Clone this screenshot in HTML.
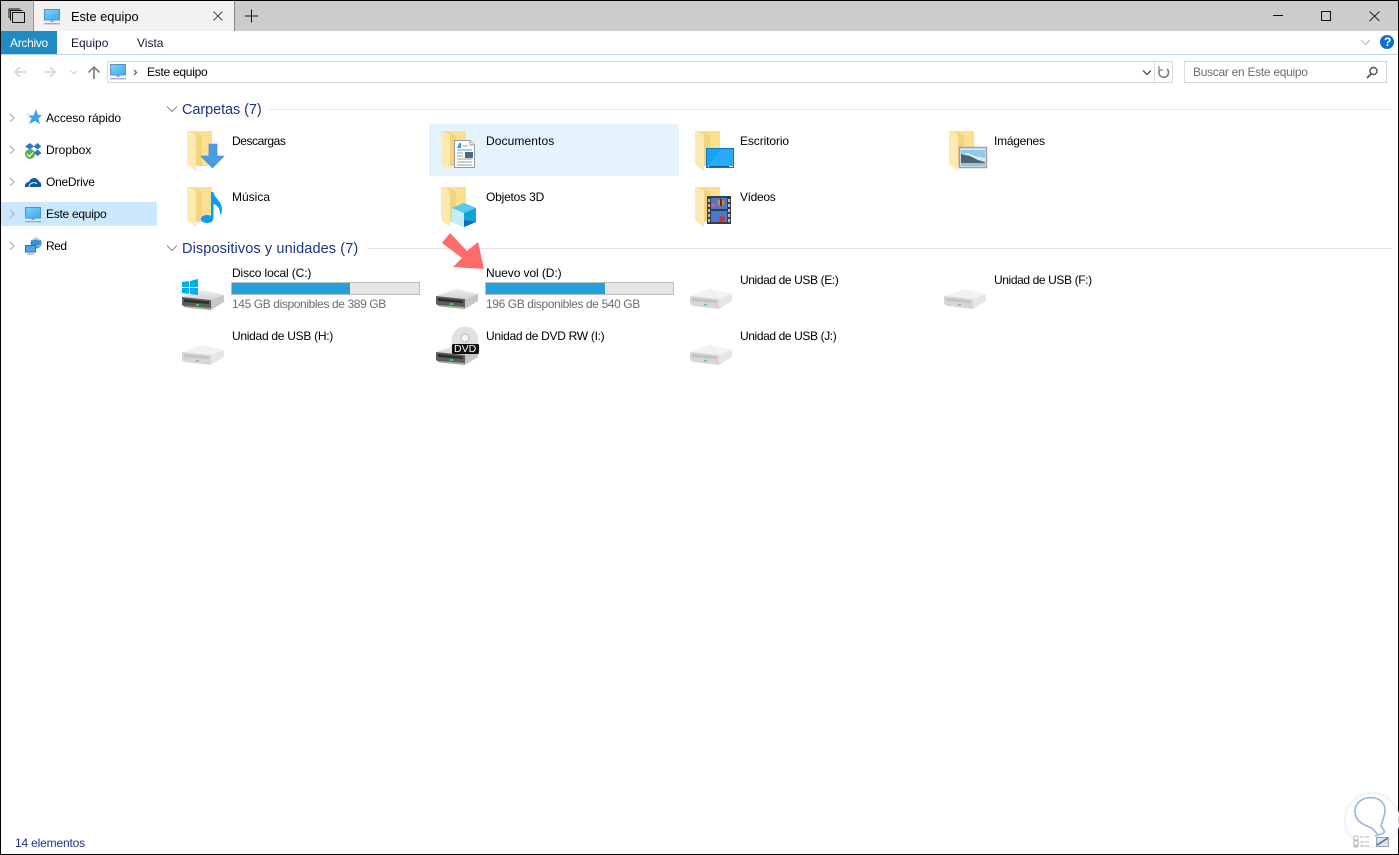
<!DOCTYPE html>
<html lang="es">
<head>
<meta charset="utf-8">
<title>Este equipo</title>
<style>
html,body{margin:0;padding:0;background:#fff;}
body{position:relative;width:1399px;height:855px;overflow:hidden;font-family:"Liberation Sans",sans-serif;font-size:12px;color:#000;}
.a{position:absolute;}
.t{position:absolute;height:16px;line-height:16px;white-space:nowrap;}
.h{position:absolute;height:20px;line-height:20px;font-size:14.5px;color:#1e3287;white-space:nowrap;}
.g{color:#6d6d6d;}
.bar{position:absolute;width:187px;height:11px;background:#e6e6e6;border:1px solid #bcbcbc;}
.bar div{height:11px;background:#26a0da;}
svg{position:absolute;left:0;top:0;}
</style>
</head>
<body>
<div class="a" style="left:0;top:0;width:1399px;height:31px;background:#ccc;"></div>
<div class="a" style="left:34px;top:1px;width:200px;height:30px;background:#f2f2f2;"></div>
<div class="a" style="left:33px;top:1px;width:1px;height:30px;background:#9a9a9a;"></div>
<div class="a" style="left:234px;top:1px;width:1px;height:30px;background:#888;"></div>
<div class="a" style="left:1px;top:31px;width:56px;height:23px;background:#1e8bc3;"></div>
<div class="a" style="left:1px;top:54px;width:1397px;height:1px;background:#bcd8e6;"></div>
<div class="a" style="left:107px;top:61px;width:1064px;height:20px;border:1px solid #d9d9d9;"></div>
<div class="a" style="left:1154px;top:62px;width:1px;height:20px;background:#d9d9d9;"></div>
<div class="a" style="left:1184px;top:61px;width:201px;height:20px;border:1px solid #d9d9d9;"></div>
<div class="a" style="left:1px;top:202px;width:156px;height:24px;background:#cce8ff;"></div>
<div class="a" style="left:429px;top:124px;width:250px;height:52px;background:#e5f3ff;"></div>
<div class="a" style="left:269px;top:109px;width:1123px;height:1px;background:#e5e5e5;"></div>
<div class="a" style="left:367px;top:248px;width:1025px;height:1px;background:#e5e5e5;"></div>

<svg width="1399" height="855" viewBox="0 0 1399 855" fill="none">
<defs>
<linearGradient id="scr" x1="0" y1="0" x2="1" y2="1"><stop offset="0" stop-color="#7fd3fb"/><stop offset="1" stop-color="#3aa9f2"/></linearGradient>
<linearGradient id="dt" x1="0" y1="0" x2="0" y2="1"><stop offset="0" stop-color="#ececec"/><stop offset="1" stop-color="#d4d4d4"/></linearGradient>
<g id="pc">
<rect x="0.5" y="0.5" width="15" height="10.5" fill="url(#scr)" stroke="#5a8fb8"/>
<rect x="6.5" y="11" width="3" height="2" fill="#8aa0b8"/>
<rect x="0" y="14" width="16" height="1.4" fill="#a9a3d9"/>
</g>
<g id="folder">
<path d="M0 0H25V35H9V40L0 33Z" fill="#fcdf90"/>
<path d="M8 1L15 5V35H8Z" fill="#f2d47f"/>
<path d="M0 0L9 4V40L0 33Z" fill="#fdeab2"/>
</g>
<g id="drive">
<path d="M0 7L20 0L42 5L29 10Z" fill="url(#dt)"/>
<path d="M0 7L29 10V20L3 17L0 15Z" fill="#5e5e5e"/>
<path d="M2 9L27 11.500V14L2 12Z" fill="#2e2e2e"/>
<path d="M3 16L29 18V20L3 17.500Z" fill="#a8a8a8"/>
<path d="M29 10L42 5V12L29 20Z" fill="#c6c6c6"/>
<rect x="14" y="14" width="3" height="2" fill="#3fd24f"/>
</g>
<g id="usb">
<path d="M0 7L20 0L42 5L29 10Z" fill="#f2f2f2"/>
<path d="M0 7L29 10V20L3 17L0 15Z" fill="#d6d6d6"/>
<path d="M2 9L27 11.500V14L2 12Z" fill="#c2c2c2"/>
<path d="M29 10L42 5V12L29 20Z" fill="#e6e6e6"/>
<rect x="14" y="15" width="3" height="1.500" fill="#74c77f"/>
</g>
</defs>

<!-- window border -->
<rect x="0" y="0" width="1399" height="1" fill="#000"/>
<rect x="0" y="0" width="1" height="855" fill="#000"/>
<rect x="1398" y="0" width="1" height="855" fill="#000"/>
<rect x="0" y="854" width="1399" height="1" fill="#000"/>

<!-- title bar -->
<rect x="12.500" y="12.500" width="12" height="10" fill="none" stroke="#111"/>
<path d="M10.500 20.500V10.500H22.500M9 18V9H20" stroke="#111"/>
<use href="#pc" x="44" y="9"/>
<path d="M213.500 11.500L222.500 20.500M222.500 11.500L213.500 20.500" stroke="#444"/>
<path d="M251.500 9.500V22.500M245 16H258" stroke="#111" stroke-width="1"/>
<path d="M1273 15.500H1283" stroke="#111"/>
<rect x="1321.500" y="11.500" width="9" height="9" stroke="#111"/>
<path d="M1369.500 11.500L1379.500 21M1379.500 11.500L1369.500 21" stroke="#222"/>

<!-- ribbon right -->
<path d="M1361 40L1365.500 44.500L1370 40" stroke="#b5b5b5"/>
<circle cx="1387" cy="42" r="7" fill="#0f6fd0"/>

<!-- nav -->
<path d="M26 72H15M20 67L15 72L20 77" stroke="#d6d6d6" stroke-width="1.600"/>
<path d="M44 72H55M50 67L55 72L50 77" stroke="#d6d6d6" stroke-width="1.600"/>
<path d="M71 71L74 74L77 71" stroke="#d2d2d2" stroke-width="1.200"/>
<path d="M94 79V67M88.500 72.500L94 67L99.500 72.500" stroke="#858585" stroke-width="1.800"/>
<use href="#pc" x="110" y="64"/>
<path d="M134 70L136.500 72.500L134 75" stroke="#666" stroke-width="1.300"/>
<path d="M1143 70.500L1147 74.500L1151 70.500" stroke="#555" stroke-width="1.400"/>
<path d="M1167 69A4.800 4.800 0 1 1 1160 69.500" stroke="#7e7e7e" stroke-width="1.600"/>
<path d="M1159 66V70H1163" stroke="#7e7e7e" stroke-width="1.200"/>
<circle cx="1373.500" cy="71" r="3.500" stroke="#555" stroke-width="1.400"/>
<path d="M1371 74L1367 78" stroke="#555" stroke-width="1.800"/>

<!-- sidebar chevrons -->
<path d="M10 114L14 118L10 122M10 146L14 150L10 154M10 178L14 182L10 186M10 210L14 214L10 218M10 242L14 246L10 250" stroke="#b9b9b9" stroke-width="1.300"/>
<!-- star -->
<path d="M36 109L38 115H42L38.500 118.500L40 124L35 121L29 124L31.500 118.500L28 115.500H33.500Z" fill="#3da3ea"/>
<path d="M26 114H30M27 118H29" stroke="#bcdcf5"/>
<!-- dropbox -->
<path d="M30 143L25 146.500L30 149.500L34 146.500ZM37.500 143L33.500 146.500L37.500 149.500L41.500 146.500ZM30 149.500L25 153L30 156L34 153ZM37.500 149.500L33.500 153L37.500 156L41.500 153Z" fill="#2a78c8"/>
<circle cx="30" cy="154" r="5" fill="#5fae4a"/>
<path d="M27 154L29.500 156.500L33 152.500" stroke="#fff" stroke-width="1.200"/>
<!-- onedrive -->
<path d="M25 187C24.500 184 26.500 182 29 182C30.500 177 37 176.500 39 181.500C41 182 41.800 185 41 187Z" fill="#0f5aa8"/>
<path d="M29 187C29 183.500 33 181.500 37 183.500" stroke="#fff" stroke-width="1"/>
<!-- pc -->
<use href="#pc" x="25" y="207"/>
<!-- red -->
<circle cx="36" cy="243" r="5.500" fill="#3a8fd8"/>
<path d="M32 240C34 238 38 238 40 240" stroke="#cfe6f8" stroke-width="1.500"/>
<path d="M34 246C36 247 39 246 40 245" stroke="#9cccf0" stroke-width="1"/>
<rect x="25.500" y="245.500" width="10" height="6.500" fill="#4aa5ea" stroke="#3b6f9c"/>
<path d="M27 254H34" stroke="#a9a3d9" stroke-width="1.300"/>

<!-- section chevrons -->
<path d="M167 106.500L172 111.500L177 106.500M167 245.500L172 250.500L177 245.500" stroke="#8a8a8a" stroke-width="1"/>

<!-- folders -->
<use href="#folder" x="187" y="131"/>
<use href="#folder" x="441" y="131"/>
<use href="#folder" x="695" y="131"/>
<use href="#folder" x="949" y="131"/>
<use href="#folder" x="187" y="187"/>
<use href="#folder" x="441" y="187"/>
<use href="#folder" x="695" y="187"/>

<!-- download arrow -->
<path d="M209 144H217V156H224L212.500 168L201 156H209Z" fill="#4a9be8" stroke="#3c86d2" stroke-width="0.600"/>
<!-- music -->
<ellipse cx="207" cy="219" rx="6" ry="4" fill="#0a9cf0"/>
<path d="M211 219V192H213.500C214 198 222 201 222 209C222 212 221 214 220 215C220.500 208 217 205 213.500 204V219Z" fill="#0a9cf0"/>
<!-- document -->
<path d="M454.500 140.500H470L474.500 145V167.500H454.500Z" fill="#fff" stroke="#999"/>
<path d="M470 140.500V145H474.500" stroke="#999" fill="#eee"/>
<path d="M457 148L459.500 143H461V148Z" fill="#2b95e8"/>
<path d="M463 146H468M457 153H463M457 156H463M457 159H472M457 162H472M457 165H472" stroke="#9d9d9d"/>
<path d="M457 150H472" stroke="#4aa8ea"/>
<rect x="465" y="152" width="8" height="6" fill="#4a6a86"/>
<!-- cube -->
<path d="M464 203L476 208V222L464 227L452 222V208Z" fill="#0fa5d5"/>
<path d="M452 208L464 203L476 208L464 213Z" fill="#5cc8f2"/>
<path d="M452 208L464 213V227L452 222Z" fill="#c2eef5"/>
<path d="M464 220L476 222L464 227Z" fill="#0a6fc0"/>
<!-- desktop -->
<rect x="706.500" y="148.500" width="27" height="19" fill="#16a2f7" stroke="#0c78c2"/>
<path d="M708 166L720 150H733V166Z" fill="#3ab4fa" opacity=".55"/>
<path d="M707 166.500H733" stroke="#0b5e9c"/>
<path d="M708 166.500H709M729 166.500H733" stroke="#fff"/>
<!-- image -->
<rect x="959.500" y="147.500" width="27" height="20" fill="#d4ecf8" stroke="#a0a0a0" stroke-width="1.500"/>
<path d="M961 150H985V158L975 156L968 153L961 154Z" fill="#8fc8ea"/>
<path d="M961 154L970 156L978 160L985 162V163H961Z" fill="#4f6670"/>
<path d="M961 163H985V166H961Z" fill="#9cc0dc"/>
<!-- video -->
<rect x="707" y="196" width="24" height="28" fill="#3e3e3e"/>
<path d="M709 199V222M729 199V222" stroke="#bdbdbd" stroke-width="2" stroke-dasharray="3 2"/>
<rect x="711" y="198" width="16" height="11" fill="#4a78d0"/>
<rect x="711" y="211" width="16" height="11" fill="#4a78d0"/>
<circle cx="721" cy="202.500" r="3.500" fill="#c8922a"/>
<path d="M721 199V206" stroke="#8c1a1a" stroke-width="2"/>
<circle cx="722" cy="219" r="3" fill="#c23a2a"/>
<path d="M712 203L717 206L712 207Z" fill="#e85a8a"/>

<!-- drives -->
<use href="#drive" x="182" y="290"/>
<path d="M182 282L189 281V287H182ZM190 281L198 279V287H190ZM182 288H189V294L182 293ZM190 288H198V295L190 294Z" fill="#00adef"/>
<use href="#drive" x="436" y="289"/>
<use href="#usb" x="690" y="289"/>
<use href="#usb" x="944" y="289"/>
<use href="#usb" x="182" y="345"/>
<use href="#drive" x="436" y="345"/>
<circle cx="465" cy="340" r="13.500" fill="#e2e2e2"/>
<circle cx="465" cy="338" r="4" fill="#f6f6f6" stroke="#b5b5b5"/>
<rect x="452" y="344" width="27" height="10" rx="1.500" fill="#111"/>
<use href="#usb" x="690" y="345"/>

<!-- red arrow -->
<path d="M442 243L450 233L467 251L478 242L484 269L453 267L462 258Z" fill="#ff6b6b"/>

<!-- watermark -->
<circle cx="1372" cy="820" r="27" stroke="#eef0f7" stroke-width="1.500"/>
<path d="M1377 834C1373 828 1371 828 1365 825C1355 821 1352 810 1358 803C1365 795 1380 796 1384 805C1387 813 1382 820 1381 826C1383 829 1385 830 1384 833L1375 836" stroke="#9ab2de" stroke-width="1.600" fill="none"/>
<path d="M1354 836H1358V840H1354ZM1354 841H1358V845H1354ZM1354 846H1358V847H1354Z" fill="#fff" stroke="#aaa" stroke-width=".8"/>
<path d="M1360 837H1369M1360 842H1369M1360 846H1369" stroke="#b5b5b5" stroke-dasharray="4 1"/>
<rect x="1376.500" y="837.500" width="12" height="9" fill="#dde4ef" stroke="#9aa3b2"/>
<path d="M1377 845L1388 838" stroke="#4a6f9c" stroke-width="1.500"/>
</svg>

<!-- title + ribbon -->
<div class="t" style="left:71px;top:9px;font-size:12.8px;">Este equipo</div>
<div class="t" style="left:10px;top:35px;color:#fff;letter-spacing:-.3px;">Archivo</div>
<div class="t" style="left:71px;top:35px;color:#1a1a2e;">Equipo</div>
<div class="t" style="left:137px;top:35px;color:#1a1a2e;">Vista</div>
<div class="t" style="left:1384px;top:34px;width:6px;color:#fff;font-weight:bold;">?</div>
<div class="t" style="left:147px;top:64px;letter-spacing:-.27px;">Este equipo</div>
<div class="t g" style="left:1193px;top:64px;letter-spacing:-.29px;">Buscar en Este equipo</div>

<!-- sidebar -->
<div class="t" style="left:46px;top:110px;letter-spacing:-.08px;">Acceso rápido</div>
<div class="t" style="left:46px;top:142px;">Dropbox</div>
<div class="t" style="left:46px;top:174px;letter-spacing:-.25px;">OneDrive</div>
<div class="t" style="left:46px;top:206px;letter-spacing:-.27px;">Este equipo</div>
<div class="t" style="left:46px;top:238px;letter-spacing:-.5px;">Red</div>

<!-- headings -->
<div class="h" style="left:182px;top:100px;letter-spacing:-.08px;">Carpetas (7)</div>
<div class="h" style="left:182px;top:239px;letter-spacing:.115px;">Dispositivos y unidades (7)</div>

<!-- folders -->
<div class="t" style="left:232px;top:133px;letter-spacing:-.44px;">Descargas</div>
<div class="t" style="left:486px;top:133px;letter-spacing:.1px;">Documentos</div>
<div class="t" style="left:740px;top:133px;letter-spacing:-.1px;">Escritorio</div>
<div class="t" style="left:994px;top:133px;letter-spacing:-.25px;">Imágenes</div>
<div class="t" style="left:232px;top:189px;">Música</div>
<div class="t" style="left:486px;top:189px;letter-spacing:-.2px;">Objetos 3D</div>
<div class="t" style="left:740px;top:189px;letter-spacing:-.33px;">Vídeos</div>

<!-- drives -->
<div class="t" style="left:232px;top:265px;letter-spacing:-.13px;">Disco local (C:)</div>
<div class="bar" style="left:231px;top:282px;"><div style="width:118px;"></div></div>
<div class="t g" style="left:232px;top:296px;letter-spacing:-.39px;">145 GB disponibles de 389 GB</div>
<div class="t" style="left:486px;top:265px;letter-spacing:-.08px;">Nuevo vol (D:)</div>
<div class="bar" style="left:485px;top:282px;"><div style="width:119px;"></div></div>
<div class="t g" style="left:486px;top:296px;letter-spacing:-.39px;">196 GB disponibles de 540 GB</div>
<div class="t" style="left:740px;top:272px;letter-spacing:-.39px;">Unidad de USB (E:)</div>
<div class="t" style="left:994px;top:272px;letter-spacing:-.39px;">Unidad de USB (F:)</div>
<div class="t" style="left:232px;top:328px;letter-spacing:-.28px;">Unidad de USB (H:)</div>
<div class="t" style="left:486px;top:328px;letter-spacing:-.29px;">Unidad de DVD RW (I:)</div>
<div class="t" style="left:740px;top:328px;letter-spacing:-.39px;">Unidad de USB (J:)</div>
<div class="t" style="left:454px;top:343px;color:#fff;font-size:10.5px;line-height:12px;height:12px;">DVD</div>

<!-- status -->
<div class="t" style="left:15px;top:835px;color:#1e3287;letter-spacing:-.17px;">14 elementos</div>
</body>
</html>
